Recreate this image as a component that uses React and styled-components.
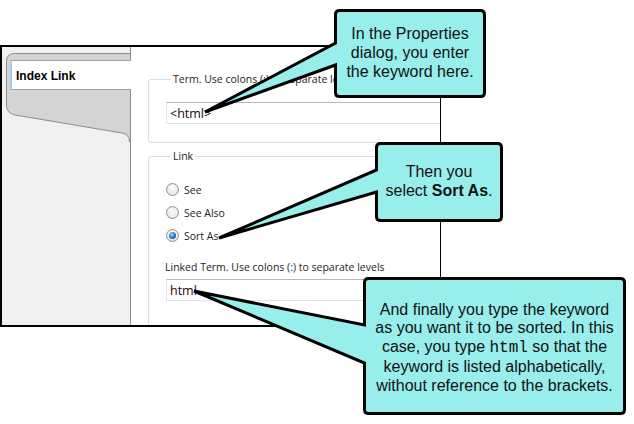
import styled, { createGlobalStyle, css } from "styled-components";

const GlobalStyle = createGlobalStyle`
  html, body {
    margin: 0;
    padding: 0;
    background: #fff;
  }
  body {
    font-family: "Open Sans", "Noto Sans", sans-serif;
  }
`;

const Page = styled.div`
  position: relative;
  width: 634px;
  height: 424px;
  overflow: hidden;
  padding-top: 45px;
  box-sizing: border-box;
`;

// dialog screenshot
const Dialog = styled.div`
  display: flex;
  width: 441px;
  height: 282px;
  box-sizing: border-box;
  border: 2px solid #000;
  border-right-width: 1px;
  background: #f0f0f0;
`;

const Sidebar = styled.div`
  width: 128px;
  flex-shrink: 0;
  padding: 6px 0 0 4px;
  box-sizing: border-box;
`;

const TabStrip = styled.div`
  position: relative;
  height: 88px;
  padding-top: 7px;
  box-sizing: border-box;
`;

const TabShape = styled.svg`
  position: absolute;
  left: 0;
  top: 0;
  width: 124px;
  height: 90px;
  overflow: hidden;
`;

const Tab = styled.div`
  position: relative;
  z-index: 1;
  margin-left: 4px;
  margin-right: -1px;
  height: 30px;
  box-sizing: border-box;
  display: flex;
  align-items: center;
  padding: 2px 0 0 4px;
  background: #fff;
  border-top: 1px solid #a0a0a0;
  border-bottom: 1px solid #a0a0a0;
  border-left: 2px solid #a6cdf5;
  font: bold 12px "Liberation Sans", Arial, sans-serif;
  color: #000;
`;

const Content = styled.div`
  flex: 1;
  background: #fff;
  border-left: 1px solid #8c8c8c;
  overflow: hidden;
  padding: 25px 0 0 17px;
`;

const Group = styled.fieldset`
  margin: ${(p) => p.$gap || 0}px 0 0;
  padding: ${(p) => p.$pad};
  width: 330px;
  box-sizing: border-box;
  border: 1px solid #d5dfe5;
  border-radius: 3px;
  min-width: 0;
`;

const Legend = styled.legend`
  margin-left: 5px;
  padding: 0 2px;
  font-size: 10.5px;
  line-height: 14px;
  color: #1e1e1e;
`;

const Caption = styled.div`
  font-size: 10.5px;
  line-height: 14px;
  color: #1e1e1e;
  margin: ${(p) => p.$top}px 0 5px -1px;
`;

const TextBox = styled.div`
  width: 300px;
  height: 22px;
  box-sizing: border-box;
  display: flex;
  align-items: center;
  padding-left: 3px;
  border: 1px solid #e2e5ea;
  border-top-color: #b5b8bf;
  font-size: 12.5px;
  color: #1a0808;
`;

const RadioRow = styled.div`
  display: flex;
  align-items: center;
  gap: 5px;
  height: 23px;
  font-size: 10.5px;
  color: #1e1e1e;
`;

const RadioDot = styled.span`
  position: relative;
  width: 13px;
  height: 13px;
  box-sizing: border-box;
  border-radius: 50%;
  border: 1px solid #8f9090;
  background: radial-gradient(circle at 50% 40%, #fdfdfd 0%, #e2e2e2 85%);
  ${(p) =>
    p.$checked &&
    css`
      &::after {
        content: "";
        position: absolute;
        inset: 2px;
        border-radius: 50%;
        background: radial-gradient(circle at 40% 35%, #a6dcff 0%, #2b7cc9 50%, #0f3f75 100%);
      }
    `}
`;

// callouts
const Bubble = styled.div`
  position: absolute;
  left: ${(p) => p.$x}px;
  top: ${(p) => p.$y}px;
  width: ${(p) => p.$w}px;
  height: ${(p) => p.$h}px;
`;

const BubbleShape = styled.svg`
  position: absolute;
  left: 0;
  top: 0;
  overflow: visible;
`;

const BubbleText = styled.div`
  position: relative;
  height: 100%;
  display: flex;
  flex-direction: column;
  align-items: center;
  justify-content: center;
  padding-top: ${(p) => p.$shift || 0}px;
  box-sizing: border-box;
  font: 16px/18.8px "Liberation Sans", Arial, sans-serif;
  color: #111;
  text-align: center;

  code {
    font-family: "Liberation Mono", "Courier New", monospace;
    font-size: 16px;
  }
`;

function Callout({ x, y, w, h, tip, wedge, shift, children }) {
  const s = 1.5;
  const r = 4;
  const R = w - s;
  const B = h - s;
  const tx = tip[0] - x;
  const ty = tip[1] - y;
  const a = wedge[0] - y;
  const b = wedge[1] - y;
  const d = `M ${s + r} ${s} H ${R - r} Q ${R} ${s} ${R} ${s + r} V ${B - r} Q ${R} ${B} ${R - r} ${B} H ${s + r} Q ${s} ${B} ${s} ${B - r} V ${b} L ${tx} ${ty} L ${s} ${a} V ${s + r} Q ${s} ${s} ${s + r} ${s} Z`;
  return (
    <Bubble $x={x} $y={y} $w={w} $h={h}>
      <BubbleShape width={w} height={h}>
        <path d={d} fill="#97eeeb" stroke="#000" strokeWidth="3" strokeLinejoin="miter" strokeMiterlimit="4" />
      </BubbleShape>
      <BubbleText $shift={shift}>{children}</BubbleText>
    </Bubble>
  );
}

export default function App() {
  return (
    <Page>
      <GlobalStyle />
      <Dialog>
        <Sidebar>
          <TabStrip>
            <TabShape viewBox="0 0 124 90">
              <path
                d="M 130 0.5 H 8.5 Q 0.5 0.5 0.5 8.5 V 52 Q 0.5 60 9 62 L 116 80 Q 123.5 81.5 123.5 89 L 130 89 Z"
                fill="#d4d4d4"
                stroke="#8c8c8c"
                strokeWidth="1"
              />
            </TabShape>
            <Tab>Index Link</Tab>
          </TabStrip>
        </Sidebar>
        <Content>
          <Group $pad="16px 0 18px 17px">
            <Legend>Term. Use colons (:) to separate levels</Legend>
            <TextBox>&lt;html&gt;</TextBox>
          </Group>
          <Group $gap={6} $pad="15px 0 30px 17px">
            <Legend>Link</Legend>
            <RadioRow>
              <RadioDot />
              See
            </RadioRow>
            <RadioRow>
              <RadioDot />
              See Also
            </RadioRow>
            <RadioRow>
              <RadioDot $checked />
              Sort As
            </RadioRow>
            <Caption $top={13}>Linked Term. Use colons (:) to separate levels</Caption>
            <TextBox>html</TextBox>
          </Group>
        </Content>
      </Dialog>

      <Callout x={334} y={9} w={152} h={89} tip={[205, 112]} wedge={[43, 65]}>
        <span>In the Properties</span>
        <span>dialog, you enter</span>
        <span>the keyword here.</span>
      </Callout>

      <Callout x={375} y={142} w={128} h={80} tip={[219, 238]} wedge={[170, 192]}>
        <span>Then you</span>
        <span>
          select <b>Sort As</b>.
        </span>
      </Callout>

      <Callout x={363} y={277} w={263} h={138} tip={[194, 291]} wedge={[325, 363]} shift={4}>
        <span>And finally you type the keyword</span>
        <span>as you want it to be sorted. In this</span>
        <span>
          case, you type <code>html</code> so that the
        </span>
        <span>keyword is listed alphabetically,</span>
        <span>without reference to the brackets.</span>
      </Callout>
    </Page>
  );
}
